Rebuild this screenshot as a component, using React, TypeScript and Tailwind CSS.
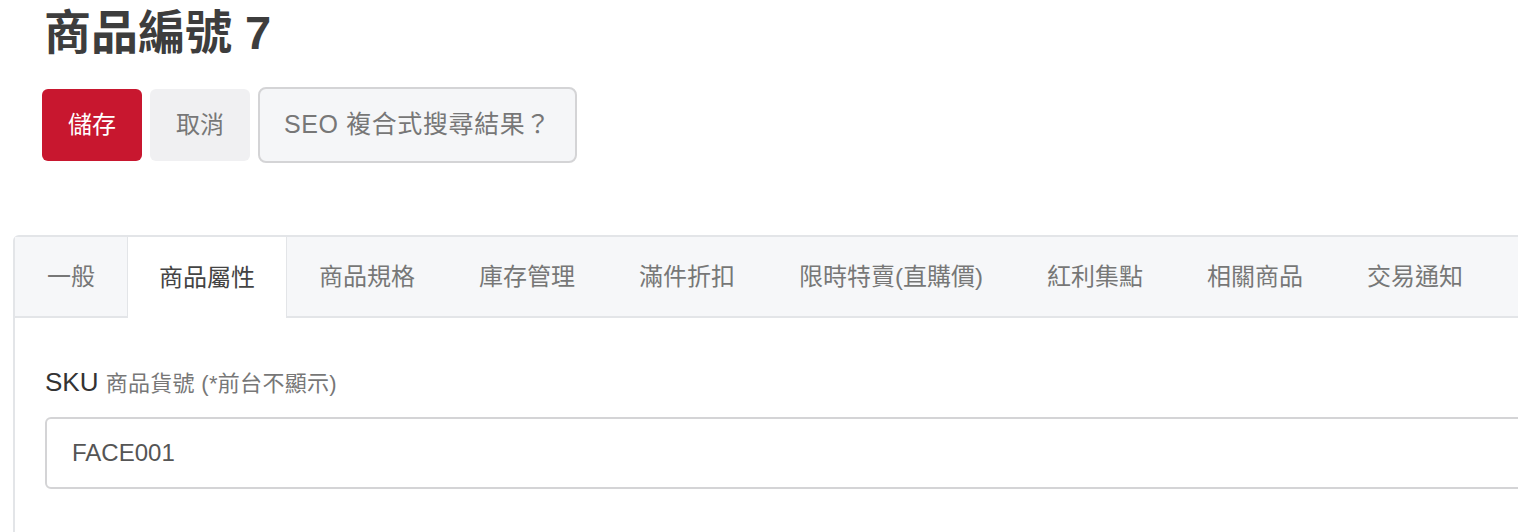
import { useState } from "react";

const tabs = [
  "一般",
  "商品屬性",
  "商品規格",
  "庫存管理",
  "滿件折扣",
  "限時特賣(直購價)",
  "紅利集點",
  "相關商品",
  "交易通知",
];

export default function App() {
  const [active, setActive] = useState(1);
  const [sku, setSku] = useState("FACE001");

  return (
    <div
      className="w-full h-[532px] overflow-hidden bg-white text-[#444]"
      style={{ fontFamily: '"Liberation Sans", "Noto Sans CJK TC", sans-serif' }}
    >
      {/* Header */}
      <div className="pl-[44px] pt-[2px]">
        <h1 className="text-[47px] leading-[62px] font-bold text-[#3d3d3d]">商品編號 7</h1>
        <div className="mt-[23px] flex items-center gap-2">
          <button className="h-[72px] px-[26px] rounded-md bg-[#c8172f] text-white text-[24px] -ml-[2px]">
            儲存
          </button>
          <button className="h-[72px] px-[26px] rounded-md bg-[#f0f0f2] text-[#777] text-[24px]">
            取消
          </button>
          <button className="h-[76px] px-[24px] rounded-lg border-2 border-[#d4d4d6] bg-[#f5f6f8] text-[#777] text-[25px] tracking-[0.6px]">
            SEO 複合式搜尋結果？
          </button>
        </div>
      </div>

      {/* Tabs card */}
      <div className="mt-[72px] ml-[13px] w-[1540px] border-2 border-[#e3e5e8] rounded-tl-md">
        <div className="flex bg-[#f6f7f9] border-b-2 border-[#e3e5e8]">
          {tabs.map((t, i) => (
            <button
              key={t}
              onClick={() => setActive(i)}
              className={
                i === active
                  ? "h-[81px] -mb-[2px] px-[31px] text-[24px] text-[#444] bg-white border-x border-[#e3e5e8]"
                  : "h-[79px] px-[31px] text-[24px] text-[#777] border-x border-transparent"
              }
            >
              {t}
            </button>
          ))}
        </div>

        <div className="pl-[30px] pt-[46px] pb-[80px]">
          <label className="block text-[26px] text-[#333] leading-[36px]">
            SKU <span className="text-[22px] text-[#777] tracking-[0.3px]">商品貨號 (*前台不顯示)</span>
          </label>
          <input
            value={sku}
            onChange={(e) => setSku(e.target.value)}
            className="mt-[15px] w-full h-[72px] px-[25px] text-[24px] text-[#555] border-2 border-[#d4d4d6] rounded-md outline-none"
          />
        </div>
      </div>
    </div>
  );
}
